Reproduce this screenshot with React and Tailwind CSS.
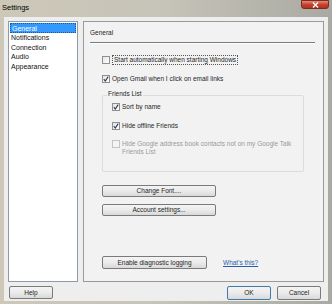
const font = { fontFamily: '"Liberation Sans", Arial, sans-serif' };

const Check = ({ checked, disabled }) => (
  <span
    className={`flex items-center justify-center w-[8px] h-[8px] shrink-0 border ${
      disabled ? 'border-[#c4c4c4] bg-[#f4f4f4]' : 'border-[#8f8f8f] bg-linear-to-br from-[#e4e4e4] to-[#ffffff]'
    }`}
  >
    {checked && (
      <svg width="6" height="6" viewBox="0 0 6 6">
        <path d="M0.8 3.2 L2.3 5 L5.2 0.6" fill="none" stroke="#2c3a5c" strokeWidth="1.1" />
      </svg>
    )}
  </span>
);

const Row = ({ checked, disabled, focus, children, className = '' }) => (
  <div className={`flex items-start gap-[2px] ${className}`}>
    <Check checked={checked} disabled={disabled} />
    <span
      className={`leading-[8px] ${disabled ? 'text-[#9a9a9a]' : 'text-[#1e1e1e]'} ${
        focus ? 'border border-dotted border-[#555] px-[1px] -mt-[1px]' : ''
      }`}
    >
      {children}
    </span>
  </div>
);

const Btn = ({ children, className = '', primary }) => (
  <div
    className={`flex items-center justify-center rounded-[2px] border text-[6.5px] text-[#1e1e1e] bg-linear-to-b from-[#f4f4f4] via-[#ebebeb] to-[#d9d9d9] ${
      primary ? 'border-[#3d7bad]' : 'border-[#7a7a7a]'
    } ${className}`}
  >
    {children}
  </div>
);

export default function App() {
  return (
    <div
      style={font}
      className="relative w-[332px] h-[304px] overflow-hidden flex flex-col bg-linear-to-r from-[#cdc8b8] via-[#c6c3b8] to-[#a9aaa3]"
    >
      <div className="h-[17px] flex items-start pl-[2px] pt-[2px] text-[7.5px] text-black">
        Settings
      </div>
      <div className="absolute top-0 right-[3px] w-[28px] h-[9px] rounded-b-[3px] border border-[#7a2b22] bg-linear-to-b from-[#e38a77] via-[#c8412d] to-[#b0321f] flex items-center justify-center">
        <svg width="7" height="6" viewBox="0 0 7 6">
          <path d="M1 0.5 L6 5.5 M6 0.5 L1 5.5" stroke="#fff" strokeWidth="1.4" />
        </svg>
      </div>

      <div className="flex-1 mx-[4px] mb-[3px] bg-[#eeeeee] flex flex-col px-[4px] pt-[4px]">
        <div className="flex gap-[5px] h-[261px]">
          <div className="w-[70px] border border-[#8e9aa6] bg-white p-[1px] text-[7px] text-[#111]">
            <div className="h-[10px] leading-[10px] bg-[#3399ff] text-white pl-[1px] border border-dotted border-[#1a5a9a]">
              General
            </div>
            <div className="h-[9.5px] leading-[9.5px] pl-[1px]">Notifications</div>
            <div className="h-[9.5px] leading-[9.5px] pl-[1px]">Connection</div>
            <div className="h-[9.5px] leading-[9.5px] pl-[1px]">Audio</div>
            <div className="h-[9.5px] leading-[9.5px] pl-[1px]">Appearance</div>
          </div>

          <div className="flex-1 border border-[#9a9a9a] bg-[#f2f2f2] flex flex-col pl-[6px] pr-[8px] pt-[7px] text-[6.5px]">
            <div className="text-[#1e1e1e] leading-[8px]">General</div>
            <div className="mt-[5px] h-[2px] border-t border-[#7a7a7a] border-b border-b-white" />

            <div className="pl-[12px] flex flex-col">
              <Row focus className="mt-[12px]">Start automatically when starting Windows</Row>
              <Row checked className="mt-[10px]">Open Gmail when I click on email links</Row>

              <div className="relative mt-[12px] w-[202px] h-[77px] border border-[#dcdcdc] rounded-[2px] pl-[9px] pt-[7px] flex flex-col">
                <div className="absolute -top-[6px] left-[4px] bg-[#f2f2f2] px-[1px] leading-[8px] text-[#1e1e1e]">
                  Friends List
                </div>
                <Row checked>Sort by name</Row>
                <Row checked className="mt-[11px]">Hide offline Friends</Row>
                <Row disabled className="mt-[10px]">
                  Hide Google address book contacts not on my Google Talk
                  <br />
                  Friends List
                </Row>
              </div>

              <Btn className="mt-[13px] w-[114px] h-[12px]">Change Font....</Btn>
              <Btn className="mt-[7px] w-[114px] h-[12px]">Account settings...</Btn>

              <div className="mt-[40px] flex items-center gap-[16px]">
                <Btn className="w-[105px] h-[13px]">Enable diagnostic logging</Btn>
                <span className="text-[#2a5db0] underline">What's this?</span>
              </div>
            </div>
          </div>
        </div>

        <div className="flex items-start pt-[4px]">
          <Btn className="ml-[1px] w-[44px] h-[13px]">Help</Btn>
          <div className="flex-1" />
          <Btn primary className="w-[44px] h-[14px]">OK</Btn>
          <Btn className="ml-[6px] w-[44px] h-[14px]">Cancel</Btn>
          <div className="w-[3px]" />
        </div>
      </div>
    </div>
  );
}
